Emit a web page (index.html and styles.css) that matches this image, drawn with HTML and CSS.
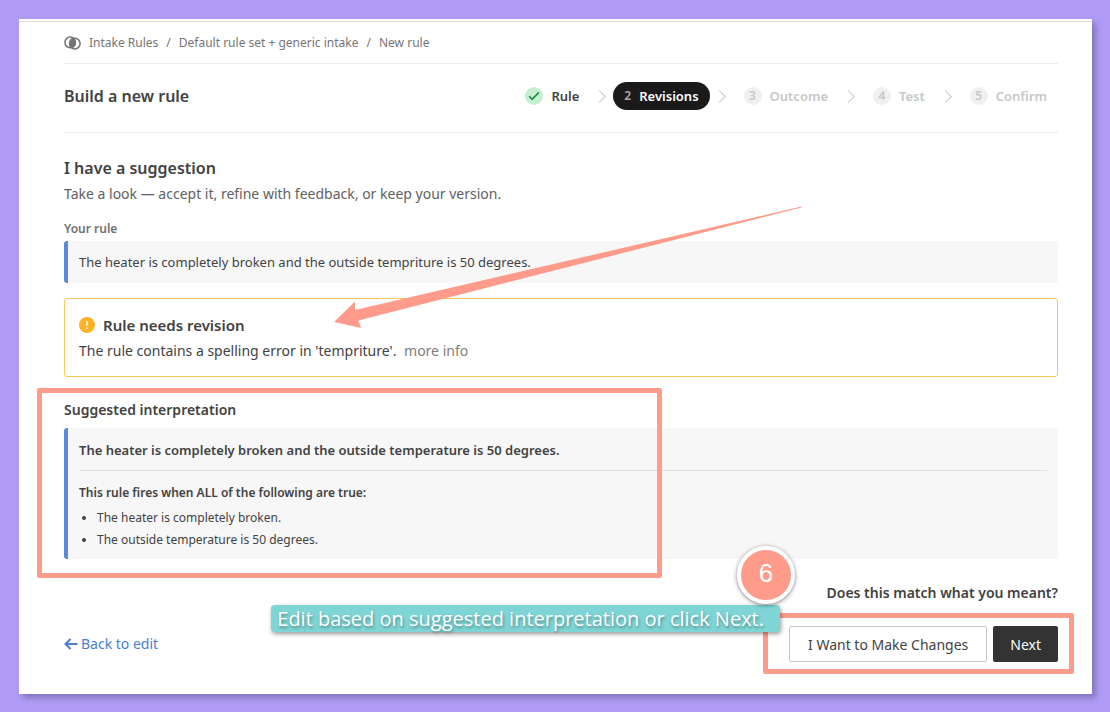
FILE: index.html
```html
<!DOCTYPE html>
<html lang="en">

<head>
    <meta charset="UTF-8">
    <meta name="viewport" content="width=device-width, initial-scale=1.0">
    <title>New rule - Intake Rules</title>
    <link rel="stylesheet" href="styles.css">
</head>

<body>
    <main class="page">
        <!-- Breadcrumb -->
        <nav class="breadcrumb" aria-label="Breadcrumb">
            <svg class="breadcrumb-icon" viewBox="0 0 17 14" aria-hidden="true">
                <path d="M8.500 1.800a5.900 5.900 0 0 1 0 10.400a5.900 5.900 0 0 1 0-10.400z" fill="#757575" />
                <circle cx="6.200" cy="6.400" r="5.300" fill="none" stroke="#757575" stroke-width="1.500" />
                <circle cx="10.800" cy="7.600" r="5.300" fill="none" stroke="#757575" stroke-width="1.500" />
            </svg>
            <a href="#">Intake Rules</a>
            <span>/</span>
            <a href="#">Default rule set + generic intake</a>
            <span>/</span>
            <a href="#">New rule</a>
        </nav>

        <!-- Title and steps -->
        <header class="header">
            <h1 class="title">Build a new rule</h1>
            <ol class="steps">
                <li class="step step-done">
                    <span class="step-number">
                        <svg class="check" viewBox="0 0 12 10" aria-hidden="true">
                            <path d="M1.200 5.200l3 3L10.800 1.400" />
                        </svg>
                    </span>
                    Rule
                </li>
                <li class="step step-active"><span class="step-number">2</span>Revisions</li>
                <li class="step"><span class="step-number">3</span>Outcome</li>
                <li class="step"><span class="step-number">4</span>Test</li>
                <li class="step"><span class="step-number">5</span>Confirm</li>
            </ol>
        </header>

        <!-- Submitted rule -->
        <section class="suggestion">
            <h2 class="title">I have a suggestion</h2>
            <p class="lead">Take a look — accept it, refine with feedback, or keep your version.</p>
            <h3 class="label">Your rule</h3>
            <div class="quote">The heater is completely broken and the outside tempriture is 50 degrees.</div>
            <div class="alert">
                <svg class="arrow" viewBox="0 0 470 124" aria-hidden="true">
                    <path d="M468.500 0.500L22 104L22 95.500L1 116L28 122L25.500 114.500L468.500 1.500z" />
                </svg>
                <h3 class="alert-title">
                    <svg class="alert-icon" viewBox="0 0 16 16" aria-hidden="true">
                        <circle cx="8" cy="8" r="8" fill="#ffb224" />
                        <path d="M8 4v4.600M8 10.600v1.500" stroke="#fff" stroke-width="1.600" />
                    </svg>
                    Rule needs revision
                </h3>
                <p class="alert-text">The rule contains a spelling error in 'tempriture'. <a href="#">more info</a></p>
            </div>
        </section>

        <!-- Suggested interpretation -->
        <section class="interpretation">
            <h3 class="subtitle">Suggested interpretation</h3>
            <div class="quote quote-tall">
                <p class="statement">The heater is completely broken and the outside temperature is 50 degrees.</p>
                <p class="condition">This rule fires when ALL of the following are true:</p>
                <ul class="conditions">
                    <li>The heater is completely broken.</li>
                    <li>The outside temperature is 50 degrees.</li>
                </ul>
            </div>
            <div class="marker marker-interpretation"></div>
        </section>

        <!-- Footer -->
        <footer class="footer">
            <p class="question">Does this match what you meant?</p>
            <div class="footer-row">
                <a href="#" class="back">
                    <svg class="back-icon" viewBox="0 0 14 12" aria-hidden="true">
                        <path d="M13.500 6H1.500M6.500 1L1.500 6L6.500 11" />
                    </svg>
                    Back to edit
                </a>
                <div class="actions">
                    <button type="button" class="btn">I Want to Make Changes</button>
                    <button type="button" class="btn btn-primary">Next</button>
                    <div class="marker marker-actions"></div>
                    <div class="callout">Edit based on suggested interpretation or click Next.</div>
                    <div class="callout-badge">6</div>
                </div>
            </div>
        </footer>
    </main>
</body>

</html>
```
FILE: styles.css
```css
/* Global Styles */

* {
    box-sizing: border-box;
    margin: 0;
    padding: 0;
}

body {
    padding: 19px 18px 18px 19px;
    background-color: #b09cf7;
    color: #424242;
    font-family: "Segoe UI", "Noto Sans", sans-serif;
    font-size: 13px;
    line-height: 20px;
}

a {
    color: inherit;
    text-decoration: none;
}

.page {
    padding: 0 34px 32px 45px;
    background: linear-gradient(#e0e0e0, #e0e0e0) 0 2px / 100% 1px no-repeat #fff;
    box-shadow: 4px 4px 6px rgba(0, 0, 0, 0.25);
}

/* Breadcrumb */

.breadcrumb {
    display: flex;
    align-items: center;
    gap: 8px;
    height: 45px;
    padding-top: 3px;
    border-bottom: 1px solid #ebebeb;
    color: #757575;
    font-size: 12px;
}

.breadcrumb-icon {
    width: 17px;
    height: 14px;
}

/* Header */

.header {
    display: flex;
    align-items: center;
    justify-content: space-between;
    height: 69px;
    padding-bottom: 4px;
    border-bottom: 1px solid #ebebeb;
}

.title {
    font-size: 16px;
    font-weight: 600;
    line-height: 24px;
}

.steps {
    display: flex;
    align-items: center;
    gap: 9px;
    list-style: none;
}

.step {
    position: relative;
    display: flex;
    align-items: center;
    gap: 8px;
    height: 28px;
    margin-right: 14px;
    padding: 0 11px;
    color: #c7c7c7;
    font-weight: 600;
}

.step:last-child {
    margin-right: 0;
}

/* chevron between two steps */
.step:not(:last-child)::after {
    content: "";
    position: absolute;
    top: 10px;
    right: -14px;
    width: 8px;
    height: 8px;
    border: solid #c7c7c7;
    border-width: 1px 1px 0 0;
    transform: rotate(45deg);
}

.step-number {
    display: flex;
    align-items: center;
    justify-content: center;
    width: 18px;
    height: 18px;
    border-radius: 50%;
    background-color: #f0f0f0;
    font-size: 12px;
}

.step-done {
    color: #424242;
}

.step-done .step-number {
    background-color: #c6efce;
}

.check {
    width: 12px;
    height: 10px;
    fill: none;
    stroke: #107c41;
    stroke-width: 1.5;
}

.step-active {
    border-radius: 14px;
    background-color: #1a1a1a;
    color: #fff;
}

.step-active .step-number {
    width: auto;
    background: none;
    color: #adadad;
}

/* Suggestion */

.suggestion {
    padding-top: 23px;
}

.lead {
    margin-top: 2px;
    font-size: 14px;
    line-height: 24px;
    color: #616161;
}

.label {
    margin: 13px 0 2px;
    color: #707070;
    font-size: 12px;
    font-weight: 600;
}

.quote {
    padding: 11px;
    border-left: 4px solid #5b8bd9;
    border-radius: 3px;
    background-color: #f7f7f7;
}

.alert {
    position: relative;
    margin-top: 15px;
    padding: 14px 14px 11px;
    border: 1px solid #fcc65a;
    border-radius: 3px;
}

.alert-title {
    display: flex;
    align-items: center;
    gap: 8px;
    font-size: 15px;
    font-weight: 600;
    line-height: 24px;
}

.alert-icon {
    width: 16px;
    height: 16px;
}

.alert-text {
    font-size: 14px;
    line-height: 28px;
}

.alert-text a {
    margin-left: 4px;
    color: #808080;
}

.arrow {
    position: absolute;
    top: -93px;
    left: 268px;
    width: 470px;
    height: 124px;
    fill: #ff9b8a;
}

/* Interpretation */

.interpretation {
    position: relative;
    padding-top: 21px;
}

.subtitle {
    margin-bottom: 6px;
    font-size: 14px;
    font-weight: 600;
    line-height: 24px;
}

.quote-tall {
    padding: 12px 11px 8px;
}

.statement {
    padding-bottom: 10px;
    border-bottom: 1px solid #e0e0e0;
    font-weight: 600;
}

.condition {
    margin: 12px 0 4px;
    font-size: 12px;
    font-weight: 600;
}

.conditions {
    padding-left: 18px;
    font-size: 12px;
    line-height: 22px;
}

/* Footer */

.footer {
    padding-top: 22px;
}

.question {
    margin-bottom: 21px;
    font-size: 14px;
    font-weight: 600;
    line-height: 24px;
    text-align: right;
}

.footer-row {
    display: flex;
    align-items: center;
    justify-content: space-between;
}

.back {
    display: flex;
    align-items: center;
    gap: 3px;
    color: #4a7fd0;
    font-size: 14px;
}

.back-icon {
    width: 14px;
    height: 12px;
    fill: none;
    stroke: #4a7fd0;
    stroke-width: 2;
}

.actions {
    position: relative;
    display: flex;
    gap: 6px;
}

.btn {
    height: 36px;
    padding: 0 18px;
    border: 1px solid #c7c7c7;
    border-radius: 2px;
    background-color: #fff;
    color: #424242;
    font-family: inherit;
    font-size: 14px;
    cursor: pointer;
}

.btn-primary {
    padding: 0 16px;
    border-color: #333;
    background-color: #333;
    color: #fff;
}

/* Walkthrough markers */

.marker {
    position: absolute;
    border: 5px solid #ff9b8a;
    border-radius: 2px;
    pointer-events: none;
}

.marker-interpretation {
    top: 11px;
    bottom: -19px;
    left: -27px;
    width: 625px;
}

.marker-actions {
    inset: -13px -16px -12px -26px;
}

.callout {
    position: absolute;
    right: 278px;
    bottom: 30px;
    padding: 0 16px 0 6px;
    border-radius: 4px;
    background-color: #7fd5d5;
    box-shadow: 1px 2px 4px rgba(0, 0, 0, 0.4);
    color: #fff;
    font-family: "Open Sans", sans-serif;
    font-size: 20px;
    line-height: 27px;
    text-shadow: 1px 2px 3px rgba(0, 0, 0, 0.35);
    white-space: nowrap;
}

.callout-badge {
    position: absolute;
    right: 263px;
    bottom: 58px;
    width: 58px;
    height: 58px;
    border: 4px solid #fff;
    border-radius: 50%;
    background-color: #ff9b8a;
    box-shadow: 0 1px 4px rgba(0, 0, 0, 0.5);
    color: #fff;
    font-family: "Liberation Sans", sans-serif;
    font-size: 26px;
    line-height: 46px;
    text-align: center;
}
```
